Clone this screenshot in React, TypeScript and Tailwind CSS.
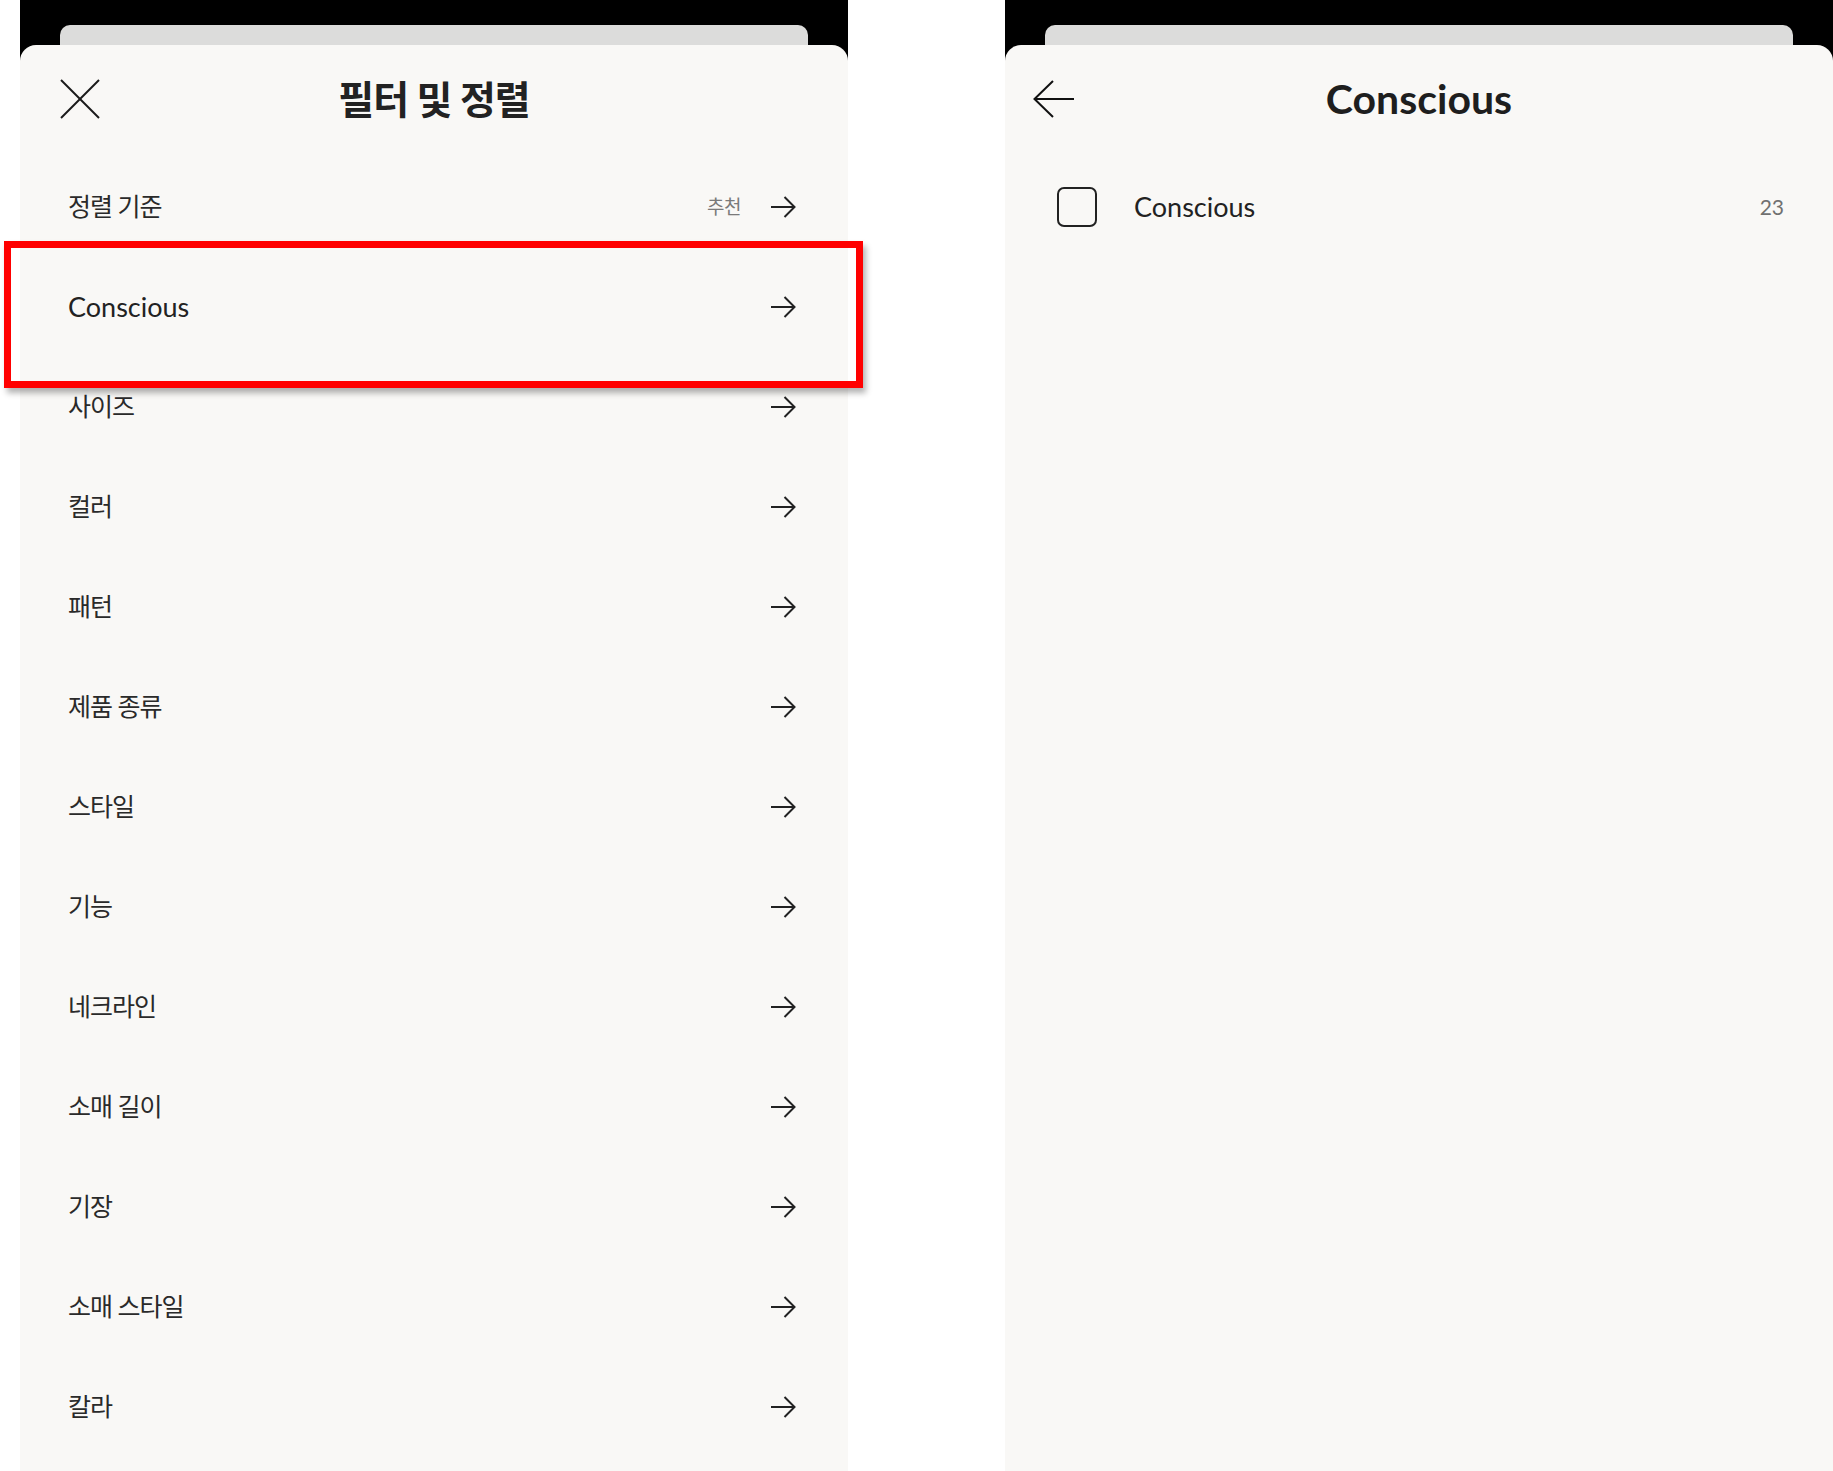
import type { ReactNode } from "react";

const FONT = "font-['Lato','Noto_Sans_CJK_KR',sans-serif]";

const filters = [
  "사이즈",
  "컬러",
  "패턴",
  "제품 종류",
  "스타일",
  "기능",
  "네크라인",
  "소매 길이",
  "기장",
  "소매 스타일",
  "칼라"
];

function ArrowRight() {
  return (
    <svg width="25" height="22" viewBox="0 0 25 22" fill="none" stroke="#222" strokeWidth="2">
      <path d="M0 11H23.5" />
      <path d="M13.5 1L23.5 11L13.5 21" />
    </svg>
  );
}

function ArrowLeft() {
  return (
    <svg width="41" height="38" viewBox="0 0 41 38" fill="none" stroke="#111" strokeWidth="2">
      <path d="M1.5 19H41" />
      <path d="M20 1L1.5 19L20 37" />
    </svg>
  );
}

function CloseIcon() {
  return (
    <svg width="40" height="40" viewBox="0 0 40 40" fill="none" stroke="#1a1a1a" strokeWidth="2">
      <path d="M1 1L39 39" />
      <path d="M39 1L1 39" />
    </svg>
  );
}

function Phone({ children }: { children: ReactNode }) {
  return (
    <div className="flex h-[1471px] w-[828px] flex-col overflow-hidden bg-black pt-[25px]">
      <div className="mx-[40px] h-[20px] shrink-0 rounded-t-[10px] bg-[#dcdcdb]" />
      <div className="flex-1 rounded-t-[16px] bg-[#f9f8f6]">{children}</div>
    </div>
  );
}

function Row({ label, value }: { label: string; value?: string }) {
  const latin = /^[A-Za-z]/.test(label);
  return (
    <div className="flex h-[100px] items-center justify-between pl-[48px] pr-[52px]">
      <span
        className={
          latin
            ? "text-[27px] text-[#222]"
            : "text-[25px] tracking-[-1px] text-[#2a2a2a]"
        }
      >
        {label}
      </span>
      <div className="flex items-center gap-[30px]">
        {value ? <span className="text-[19px] tracking-[-0.5px] text-[#7a7a7a]">{value}</span> : null}
        <ArrowRight />
      </div>
    </div>
  );
}

export default function App() {
  return (
    <div className={`relative flex h-[1471px] w-[1833px] gap-[157px] bg-white pl-[20px] ${FONT}`}>
      <Phone>
        <div className="grid h-[112px] grid-cols-[1fr_auto_1fr] items-center px-[40px] pb-[4px]">
          <CloseIcon />
          <h1 className="text-[39px] font-bold tracking-[-1px] text-[#222]">필터 및 정렬</h1>
          <div />
        </div>
        <Row label="정렬 기준" value="추천" />
        <Row label="Conscious" />
        {filters.map((f) => (
          <Row key={f} label={f} />
        ))}
      </Phone>

      <Phone>
        <div className="grid h-[112px] grid-cols-[1fr_auto_1fr] items-center px-[28px] pb-[4px]">
          <ArrowLeft />
          <h1 className="text-[41px] font-bold text-[#1e1e1e]">Conscious</h1>
          <div />
        </div>
        <div className="flex h-[100px] items-center pl-[52px] pr-[49px]">
          <span className="h-[40px] w-[40px] rounded-[7px] border-2 border-[#222]" />
          <span className="ml-[37px] flex-1 text-[27px] text-[#222]">Conscious</span>
          <span className="text-[21px] text-[#707070]">23</span>
        </div>
      </Phone>

      <div className="absolute left-[4px] top-[241px] h-[147px] w-[859px] border-[7px] border-[#ff0000] shadow-[3px_5px_6px_rgba(0,0,0,0.3)]" />
    </div>
  );
}
